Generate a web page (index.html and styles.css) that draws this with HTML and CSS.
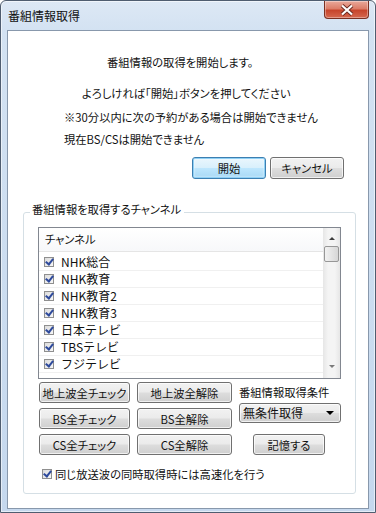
FILE: index.html
```html
<!DOCTYPE html>
<html lang="ja">
<head>
    <meta charset="UTF-8">
    <meta name="viewport" content="width=device-width, initial-scale=1.0">
    <title>番組情報取得</title>
    <link rel="stylesheet" href="styles.css">
</head>
<body>
    <div class="window">
        <div class="titlebar">
            <span class="title">番組情報取得</span>
            <div class="close">
                <svg width="16" height="12" viewBox="0 0 16 12">
                    <path d="M3 1.5 L13 10.5 M13 1.5 L3 10.5" stroke="#6b2a20" stroke-width="4" fill="none"/>
                    <path d="M3 1.5 L13 10.5 M13 1.5 L3 10.5" stroke="#ffffff" stroke-width="2.2" fill="none"/>
                </svg>
            </div>
        </div>
        <div class="client">
            <p class="msg line1">番組情報の取得を開始します。</p>
            <p class="msg line2">よろしければ「開始」ボタンを押してください</p>
            <p class="msg line3">※30分以内に次の予約がある場合は開始できません</p>
            <p class="msg line4">現在BS/CSは開始できません</p>
            <div class="actions">
                <button class="btn btn-default">開始</button>
                <button class="btn">キャンセル</button>
            </div>

            <fieldset class="group">
                <legend>番組情報を取得するチャンネル</legend>
                <div class="list">
                    <div class="list-body">
                        <div class="list-head">チャンネル</div>
                        <div class="row"><span class="check"></span>NHK総合</div>
                        <div class="row"><span class="check"></span>NHK教育</div>
                        <div class="row"><span class="check"></span>NHK教育2</div>
                        <div class="row"><span class="check"></span>NHK教育3</div>
                        <div class="row"><span class="check"></span>日本テレビ</div>
                        <div class="row"><span class="check"></span>TBSテレビ</div>
                        <div class="row"><span class="check"></span>フジテレビ</div>
                    </div>
                    <div class="scrollbar">
                        <span class="arrow-up"></span>
                        <span class="thumb"></span>
                        <span class="track"></span>
                        <span class="arrow-down"></span>
                    </div>
                </div>

                <div class="controls">
                    <div class="btn-grid">
                        <button class="btn">地上波全チェック</button>
                        <button class="btn">地上波全解除</button>
                        <button class="btn">BS全チェック</button>
                        <button class="btn">BS全解除</button>
                        <button class="btn">CS全チェック</button>
                        <button class="btn">CS全解除</button>
                    </div>
                    <div class="condition">
                        <span class="cond-label">番組情報取得条件</span>
                        <div class="combo">
                            <span>無条件取得</span>
                            <span class="combo-arrow"></span>
                        </div>
                        <button class="btn btn-save">記憶する</button>
                    </div>
                </div>

                <label class="fast"><span class="check"></span>同じ放送波の同時取得時には高速化を行う</label>
            </fieldset>
        </div>
    </div>
</body>
</html>
```

FILE: styles.css
```css
html, body {
    margin: 0;
    padding: 0;
}
body {
    width: 376px;
    height: 513px;
    overflow: hidden;
    background: #fff;
    font-family: "Noto Sans CJK JP", "Noto Sans", sans-serif;
    font-size: 11.3px;
    font-feature-settings: "palt";
    color: #111;
}
.window {
    box-sizing: border-box;
    width: 376px;
    height: 513px;
    border: 1px solid #4f5d70;
    border-radius: 6px 6px 0 0;
    background: linear-gradient(to bottom, #dde8f5 0, #d3e2f2 30px, #c5d8ee 100%);
    box-shadow: inset 0 0 0 1px rgba(255, 255, 255, 0.55);
    display: flex;
    flex-direction: column;
    padding: 0 6px 3px 6px;
}
.titlebar {
    height: 29px;
    display: flex;
    justify-content: space-between;
    align-items: flex-start;
}
.title {
    margin-top: 7px;
    margin-left: 1px;
    line-height: 16px;
    font-size: 12px;
    font-feature-settings: normal;
}
.close {
    width: 45px;
    height: 18px;
    box-sizing: border-box;
    border: 1px solid #7a3022;
    border-top: none;
    border-radius: 0 0 4px 4px;
    background: linear-gradient(to bottom, #e9a99b 0%, #dc7d68 45%, #c7452c 55%, #d5684f 100%);
    box-shadow: inset 0 0 0 1px rgba(255, 255, 255, 0.35);
    display: flex;
    align-items: center;
    justify-content: center;
}
.client {
    flex: 1;
    background: #fff;
    border: 1px solid #8898ac;
    display: flex;
    flex-direction: column;
}
.msg {
    margin: 0;
    line-height: 16px;
    white-space: nowrap;
}
.line1 { margin: 23px 0 0 99px; }
.line2 { margin: 15px 0 0 74px; }
.line3 { margin: 8px 0 0 56px; }
.line4 { margin: 6px 0 0 56px; }
.actions {
    display: flex;
    justify-content: flex-end;
    gap: 4px;
    margin: 10px 24px 0 0;
}
.btn {
    box-sizing: border-box;
    height: 21px;
    padding: 0;
    border: 1px solid #707070;
    border-radius: 3px;
    background: linear-gradient(to bottom, #f2f2f2 0%, #ebebeb 48%, #dddddd 52%, #cfcfcf 100%);
    box-shadow: inset 0 0 0 1px rgba(255, 255, 255, 0.7);
    font-family: inherit;
    font-size: 11.3px;
    font-feature-settings: "palt";
    color: #111;
    line-height: 18px;
    white-space: nowrap;
}
.actions .btn {
    width: 74px;
    height: 22px;
}
.btn-default {
    border-color: #3c7fb1;
    background: linear-gradient(to bottom, #eaf6fd 0%, #d9f0fc 48%, #bee6fd 52%, #a7d9f5 100%);
    box-shadow: inset 0 0 0 1px #8fd0f5, inset 0 0 2px 1px rgba(255, 255, 255, 0.8);
}
.group {
    margin: 22px 0 0 15px;
    width: 333px;
    box-sizing: border-box;
    border: 1px solid #d5dfe5;
    border-radius: 3px;
    padding: 0 0 11px 0;
    min-width: 0;
}
.group legend {
    margin-left: 6px;
    padding: 0 3px 6px 2px;
    line-height: 16px;
}
.list {
    margin: 4px 0 0 14px;
    width: 303px;
    height: 152px;
    box-sizing: border-box;
    border: 1px solid #828790;
    display: flex;
    overflow: hidden;
}
.list-body {
    flex: 1;
    overflow: hidden;
}
.list-head {
    height: 23px;
    line-height: 23px;
    padding-left: 6px;
    border-bottom: 1px solid #e5e5e5;
    margin-bottom: 2px;
    background: linear-gradient(to bottom, #ffffff, #f7f8fa);
}
.row {
    height: 16px;
    line-height: 16px;
    border-bottom: 1px solid #f0f0f0;
    display: flex;
    align-items: center;
    padding-left: 5px;
    gap: 7px;
    font-size: 12px;
    font-feature-settings: normal;
}
.check {
    position: relative;
    width: 10px;
    height: 10px;
    box-sizing: border-box;
    border: 1px solid #8f8f8f;
    background: linear-gradient(135deg, #dcdcdc, #f7f7f7);
    flex: none;
}
.check::after {
    content: "";
    position: absolute;
    left: 2px;
    top: -1px;
    width: 3px;
    height: 6px;
    border: solid #2e4a9c;
    border-width: 0 2px 2px 0;
    transform: rotate(38deg);
}
.scrollbar {
    width: 17px;
    display: flex;
    flex-direction: column;
    align-items: center;
    background: linear-gradient(to right, #e6e6e6, #f4f4f4 30%, #f4f4f4 70%, #e6e6e6);
}
.arrow-up, .arrow-down {
    width: 0;
    height: 0;
    border-left: 3px solid transparent;
    border-right: 3px solid transparent;
}
.arrow-up {
    margin-top: 9px;
    border-bottom: 3px solid #3c3c3c;
}
.arrow-down {
    margin-bottom: 10px;
    border-top: 3px solid #7a7a7a;
}
.thumb {
    margin-top: 6px;
    width: 15px;
    height: 16px;
    box-sizing: border-box;
    border: 1px solid #979797;
    border-radius: 2px;
    background: linear-gradient(to right, #f2f2f2, #e4e4e4 50%, #d6d6d6);
}
.track {
    flex: 1;
}
.controls {
    display: flex;
    margin: 3px 0 0 15px;
}
.btn-grid {
    display: grid;
    grid-template-columns: 91px 95px;
    grid-auto-rows: 21px;
    column-gap: 7px;
    row-gap: 5px;
}
.condition {
    margin-left: 7px;
    width: 102px;
    display: flex;
    flex-direction: column;
}
.cond-label {
    margin-top: 2px;
    line-height: 16px;
    white-space: nowrap;
}
.combo {
    margin-top: 3px;
    height: 20px;
    box-sizing: border-box;
    border: 1px solid #707070;
    border-radius: 3px;
    background: linear-gradient(to bottom, #f2f2f2 0%, #ebebeb 48%, #dddddd 52%, #cfcfcf 100%);
    box-shadow: inset 0 0 0 1px rgba(255, 255, 255, 0.7);
    display: flex;
    align-items: center;
    justify-content: space-between;
    padding: 0 6px 0 3px;
    line-height: 16px;
    font-size: 12px;
}
.combo-arrow {
    width: 0;
    height: 0;
    border-left: 4px solid transparent;
    border-right: 4px solid transparent;
    border-top: 4px solid #000;
}
.btn-save {
    margin: 11px 0 0 14px;
    width: 72px;
}
.fast {
    display: flex;
    align-items: center;
    gap: 3px;
    margin: 11px 0 0 18px;
    line-height: 16px;
    white-space: nowrap;
}
```
